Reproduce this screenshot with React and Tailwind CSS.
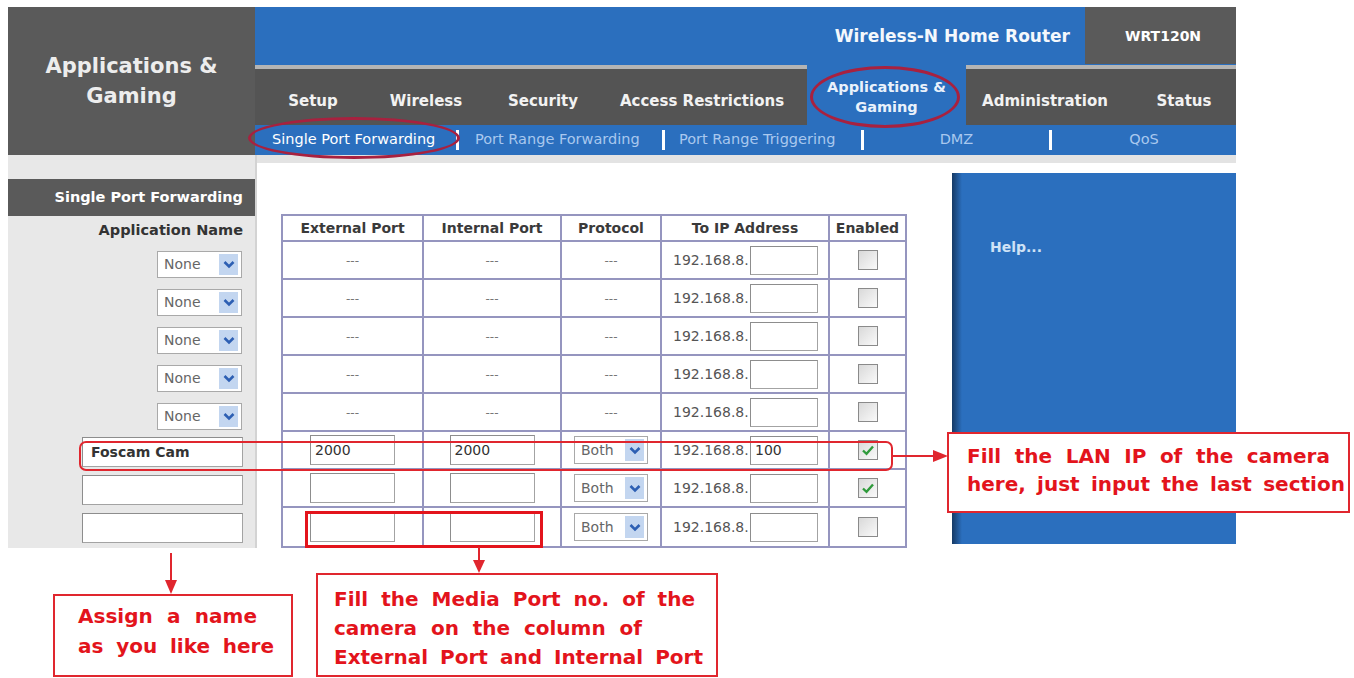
import React from "react";

const RED = "text-[#e3141c]";

const Chevron = () => (
  <svg width="12" height="9" viewBox="0 0 12 9">
    <polyline points="1.5,2 6,6.5 10.5,2" fill="none" stroke="#2d5fb3" strokeWidth="2.6" />
  </svg>
);

const Select = ({ label, className }) => (
  <div className={`flex items-stretch bg-white border border-[#a9a9a9] ${className}`}>
    <span className="flex-1 flex items-center pl-[6px] text-[14px] text-[#666]">{label}</span>
    <span className="w-[19px] my-[2px] mr-[3px] bg-[#c3d6f0] flex items-center justify-center">
      <Chevron />
    </span>
  </div>
);

const Field = ({ value, className }) => (
  <div className={`flex items-center bg-white border border-[#a3a3a3] border-t-[#8d8d8d] border-l-[#8d8d8d] pl-[4px] text-[14px] text-[#333] ${className}`}>
    {value}
  </div>
);

const Check = ({ on }) => (
  <div className="mx-auto w-[20px] h-[20px] border border-[#8a8a8a] bg-linear-to-br from-[#d9d9d9] to-[#fafafa] flex items-center justify-center">
    {on && (
      <svg width="14" height="12" viewBox="0 0 14 12">
        <path d="M2 6.5 L5.5 9.8 L12 2.5" fill="none" stroke="#2f9a3b" strokeWidth="2.4" />
      </svg>
    )}
  </div>
);

const rows = [
  {}, {}, {}, {}, {},
  { edit: true, ext: "2000", int: "2000", ip: "100", on: true },
  { edit: true, on: true },
  { edit: true },
];

const Words = ({ text, className }) => (
  <div className={`flex justify-between shrink-0 ${className}`}>
    {text.split(" ").map((w, i) => (
      <span key={i}>{w}</span>
    ))}
  </div>
);

const cell = "border-2 border-[#9595bf] text-center p-0";

export default function App() {
  return (
    <div className="relative w-[1354px] h-[678px] bg-white overflow-hidden font-['DejaVu_Sans',Verdana,sans-serif]">
      <div className="pt-[7px] pl-[8px]">
        <div className="w-[1228px]">
          {/* header */}
          <div className="flex h-[148px]">
            <div className="w-[247px] bg-[#5a5a5a] flex items-center justify-center text-center text-[21px] leading-[30px] font-bold text-[#ededed]">
              Applications &amp;<br />Gaming
            </div>
            <div className="flex-1 flex flex-col">
              <div className="h-[57px] flex">
                <div className="flex-1 bg-[#2b6fbe] flex items-center justify-end pr-[15px] pt-[2px] text-[17px] font-bold text-[#f4f8fc]">
                  Wireless-N Home Router
                </div>
                <div className="w-[151px] bg-[#5a5a5a] flex items-center pl-[40px] pt-[2px] text-[14px] font-bold text-white">
                  WRT120N
                </div>
              </div>
              <div className="h-[61px] flex bg-[#2b6fbe] pt-[1px] text-[15px] font-bold text-[#f2f2f2]">
                <div className="w-[552px] flex border-t-4 border-[#b4b4b4] bg-[#545454] pt-[8px]">
                  <div className="w-[116px] flex items-center justify-center">Setup</div>
                  <div className="w-[110px] flex items-center justify-center">Wireless</div>
                  <div className="w-[124px] flex items-center justify-center">Security</div>
                  <div className="w-[194px] flex items-center justify-center">Access Restrictions</div>
                </div>
                <div className="w-[159px] flex items-center justify-center text-center text-[14.5px] leading-[20px] pt-[3px] text-[#e9f1fb]">
                  Applications &amp;<br />Gaming
                </div>
                <div className="flex-1 flex border-t-4 border-[#b4b4b4] bg-[#545454] pt-[8px]">
                  <div className="w-[158px] flex items-center justify-center">Administration</div>
                  <div className="flex-1 flex items-center justify-center pl-[8px]">Status</div>
                </div>
              </div>
              <div className="h-[30px] flex items-center bg-[#2b6fbe] text-[14.5px] text-[#a9c8ee]">
                <div className="w-[201px] pl-[17px] text-white">Single Port Forwarding</div>
                <div className="w-[3px] h-[20px] bg-white" />
                <div className="w-[203px] pl-[16px]">Port Range Forwarding</div>
                <div className="w-[3px] h-[20px] bg-white" />
                <div className="w-[196px] pl-[14px]">Port Range Triggering</div>
                <div className="w-[3px] h-[20px] bg-white" />
                <div className="w-[185px] text-center">DMZ</div>
                <div className="w-[3px] h-[20px] bg-white" />
                <div className="flex-1 text-center">QoS</div>
              </div>
            </div>
          </div>

          {/* body */}
          <div className="flex h-[393px] overflow-hidden">
            <div className="w-[249px] shrink-0 bg-[#e8e8e8] border-r-2 border-[#d3d3d3] pt-[24px]">
              <div className="h-[37px] bg-[#5a5a5a] flex items-center justify-end pr-[12px] text-[14.5px] font-bold text-white">
                Single Port Forwarding
              </div>
              <div className="h-[27px] flex items-center justify-end pr-[12px] pt-[3px] text-[14.5px] font-bold text-[#333]">
                Application Name
              </div>
              {[0, 1, 2, 3, 4].map((i) => (
                <div key={i} className="h-[38px] flex items-center justify-end pr-[13px] pt-[4px]">
                  <Select label="None" className="w-[85px] h-[27px]" />
                </div>
              ))}
              {["Foscam Cam", "", ""].map((v, i) => (
                <div key={i} className="h-[38px] flex items-center justify-end pr-[12px]">
                  <Field value={v} className="w-[161px] h-[30px] font-bold pl-[8px]" />
                </div>
              ))}
            </div>

            <div className="flex-1 flex flex-col">
              <div className="h-[12px] bg-[#e3e3e3]" />
              <div className="flex-1 flex bg-white">
                <div className="ml-[24px] mt-[51px]">
                  <table className="border-collapse text-[14px] text-[#555]">
                    <thead>
                      <tr className="h-[26px] font-bold text-[#3a3a3a]">
                        <th className={`${cell} w-[141px]`}>External Port</th>
                        <th className={`${cell} w-[138px]`}>Internal Port</th>
                        <th className={`${cell} w-[100px]`}>Protocol</th>
                        <th className={`${cell} w-[168px]`}>To IP Address</th>
                        <th className={`${cell} w-[77px]`}>Enabled</th>
                      </tr>
                    </thead>
                    <tbody>
                      {rows.map((r, i) => (
                        <tr key={i} className={i === rows.length - 1 ? "h-[40px]" : "h-[38px]"}>
                          <td className={cell}>
                            {r.edit ? <Field value={r.ext} className="mx-auto w-[85px] h-[30px] pl-[3px]" /> : <span className="text-[12px] text-[#777]">---</span>}
                          </td>
                          <td className={cell}>
                            {r.edit ? <Field value={r.int} className="mx-auto w-[85px] h-[30px] pl-[3px]" /> : <span className="text-[12px] text-[#777]">---</span>}
                          </td>
                          <td className={cell}>
                            {r.edit ? <Select label="Both" className="mx-auto w-[74px] h-[28px]" /> : <span className="text-[12px] text-[#777]">---</span>}
                          </td>
                          <td className={cell}>
                            <div className="flex items-center pl-[11px]">
                              <span className="w-[77px] text-left">192.168.8.</span>
                              <Field value={r.ip} className="w-[68px] h-[29px] pl-[3px]" />
                            </div>
                          </td>
                          <td className={cell}>
                            <Check on={r.on} />
                          </td>
                        </tr>
                      ))}
                    </tbody>
                  </table>
                </div>
                <div className="ml-auto mt-[10px] w-[284px] h-[371px] flex bg-[#2b6fbe]">
                  <div className="w-[10px] bg-linear-to-r from-[#163a66] to-[#2b6fbe]" />
                  <div className="pl-[28px] pt-[64px] text-[14px] font-bold text-[#cfe2f6]">Help...</div>
                </div>
              </div>
            </div>
          </div>
        </div>
      </div>

      {/* annotations */}
      <div className="absolute left-[248px] top-[117px] w-[212px] h-[42px] border-[3px] border-[#a8213f] rounded-[50%]" />
      <div className="absolute left-[810px] top-[66px] w-[150px] h-[62px] border-[3px] border-[#a8213f] rounded-[50%]" />

      <div className="absolute left-[79px] top-[441px] w-[814px] h-[30px] border-2 border-[#e0262e] rounded-[7px]" />
      <svg className="absolute left-[893px] top-[448px]" width="56" height="16" viewBox="0 0 56 16">
        <line x1="0" y1="8" x2="44" y2="8" stroke="#e0262e" strokeWidth="2" />
        <polygon points="40,2 55,8 40,14" fill="#e0262e" />
      </svg>

      <div className={`absolute left-[947px] top-[432px] w-[403px] h-[81px] border-2 border-[#e0262e] bg-white overflow-hidden pl-[18px] pt-[8px] text-[20px] leading-[28px] font-bold ${RED}`}>
        <Words text="Fill the LAN IP of the camera" className="w-[363px]" />
        <Words text="here, just input the last section" className="w-[378px]" />
      </div>

      <div className="absolute left-[305px] top-[511px] w-[238px] h-[37px] border-[3px] border-[#e3141c]" />
      <svg className="absolute left-[472px] top-[547px]" width="14" height="27" viewBox="0 0 14 27">
        <line x1="7" y1="0" x2="7" y2="16" stroke="#e0262e" strokeWidth="2" />
        <polygon points="1,13 13,13 7,26" fill="#e0262e" />
      </svg>
      <div className={`absolute left-[316px] top-[573px] w-[402px] h-[104px] border-2 border-[#e0262e] bg-white pl-[16px] pt-[10px] text-[20px] leading-[29px] font-bold ${RED}`}>
        <Words text="Fill the Media Port no. of the" className="w-[361px]" />
        <Words text="camera on the column of" className="w-[308px]" />
        <Words text="External Port and Internal Port" className="w-[369px]" />
      </div>

      <svg className="absolute left-[164px] top-[553px]" width="14" height="41" viewBox="0 0 14 41">
        <line x1="7" y1="0" x2="7" y2="30" stroke="#e0262e" strokeWidth="2" />
        <polygon points="1,27 13,27 7,41" fill="#e0262e" />
      </svg>
      <div className={`absolute left-[53px] top-[594px] w-[240px] h-[83px] border-2 border-[#e0262e] bg-white pl-[23px] pt-[5px] text-[20px] leading-[30px] font-bold ${RED}`}>
        <Words text="Assign a name" className="w-[179px]" />
        <Words text="as you like here" className="w-[196px]" />
      </div>
    </div>
  );
}
